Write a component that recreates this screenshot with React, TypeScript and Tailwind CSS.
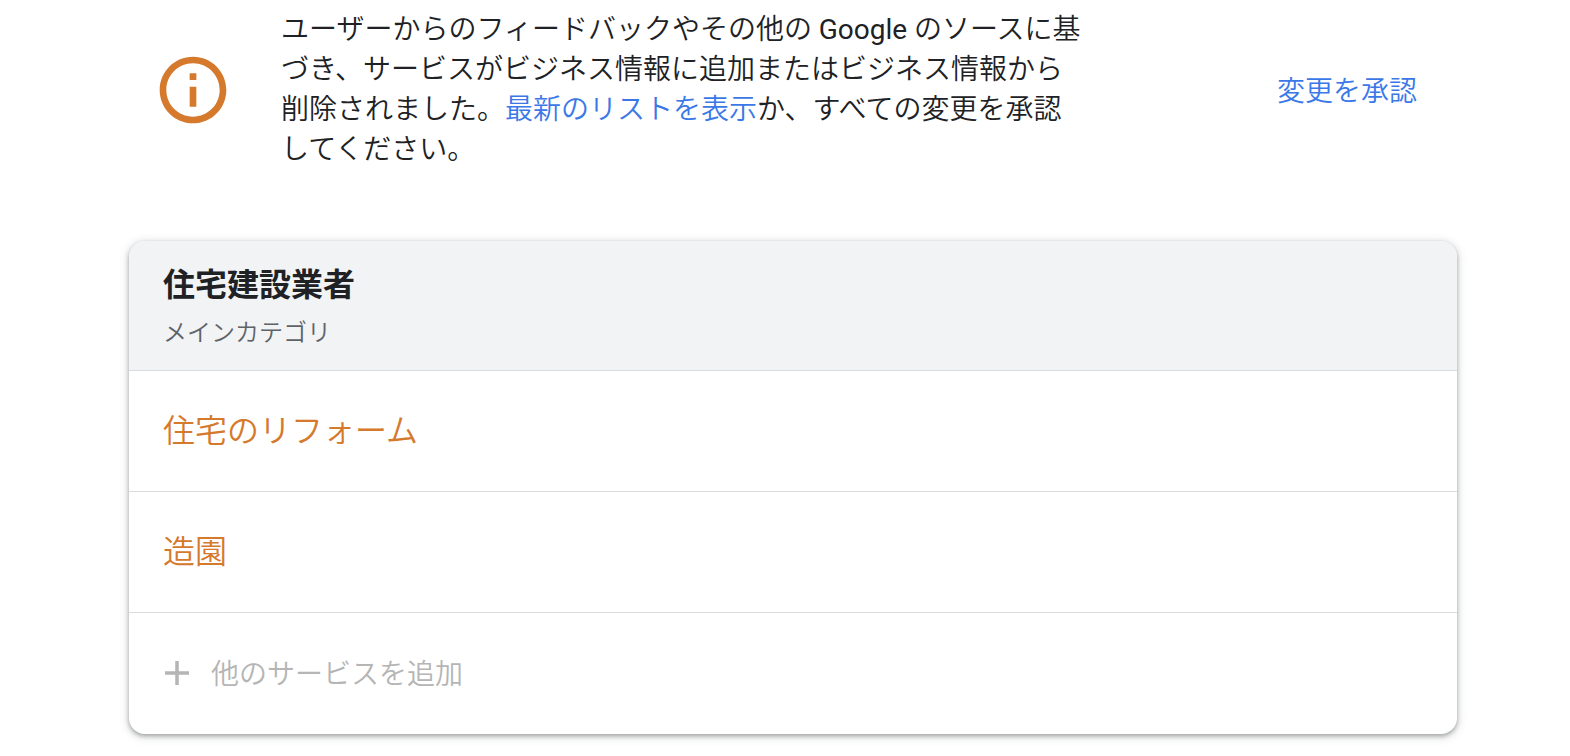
const SERVICES = ["住宅のリフォーム", "造園"];

function InfoIcon() {
  return (
    <svg viewBox="0 0 24 24" className="size-20 shrink-0 fill-[#d5792c]" aria-hidden="true">
      <path d="M11 7h2v2h-2zm0 4h2v6h-2zm1-9C6.48 2 2 6.48 2 12s4.480 10 10 10 10-4.480 10-10S17.520 2 12 2zm0 18c-4.410 0-8-3.590-8-8s3.590-8 8-8 8 3.590 8 8-3.590 8-8 8z" />
    </svg>
  );
}

function PlusIcon() {
  return (
    <svg viewBox="0 0 24 24" className="size-6 shrink-0 fill-[#b5b5b5]" aria-hidden="true">
      <path d="M10.250 0h3.500v10.250H24v3.500H13.750V24h-3.500V13.750H0v-3.500h10.250z" />
    </svg>
  );
}

function Notice() {
  return (
    <section className="flex items-center pt-[10px] pr-10 pl-6">
      <InfoIcon />
      <p className="ml-12 max-w-[800px] text-[28px] leading-10">
        ユーザーからのフィードバックやその他の <span className="font-normal">Google</span> のソースに基づき、サービスがビジネス情報に追加またはビジネス情報から削除されました。
        <a href="#services" className="text-[#3b78e7]">最新のリストを表示</a>
        か、すべての変更を承認してください。
      </p>
      <button type="button" className="ml-auto shrink-0 cursor-pointer pt-1 text-[28px] leading-10 text-[#3b78e7]">
        変更を承認
      </button>
    </section>
  );
}

export default function App() {
  return (
    <main className="bg-white pr-[113px] pb-[22px] pl-[129px] font-[350] font-[Roboto,'Noto_Sans_CJK_JP',sans-serif] text-[#202124]" lang="ja">
      <Notice />

      <section
        id="services"
        className="mt-[71px] overflow-hidden rounded-2xl bg-white shadow-[0_2px_4px_rgba(60,64,67,0.4),0_2px_8px_2px_rgba(60,64,67,0.15)]"
      >
        <header className="border-b border-[#dadce0] bg-[#f1f3f4] px-[34px] pt-5 pb-[17px]">
          <h2 className="text-[32px] leading-12 font-bold">住宅建設業者</h2>
          <p className="mt-1 text-2xl leading-10 text-[#5f6368]">メインカテゴリ</p>
        </header>

        <ul>
          {SERVICES.map((service) => (
            <li key={service} className="border-b border-[#dadce0] px-[34px] py-9 text-[32px] leading-12 text-[#d5792c]">
              {service}
            </li>
          ))}
        </ul>

        <button type="button" className="flex w-full cursor-pointer items-center gap-[22px] px-9 pt-[34px] pb-[35px] text-[28px] leading-12 text-[#b5b5b5]">
          <PlusIcon />
          <span className="pt-1">他のサービスを追加</span>
        </button>
      </section>
    </main>
  );
}
